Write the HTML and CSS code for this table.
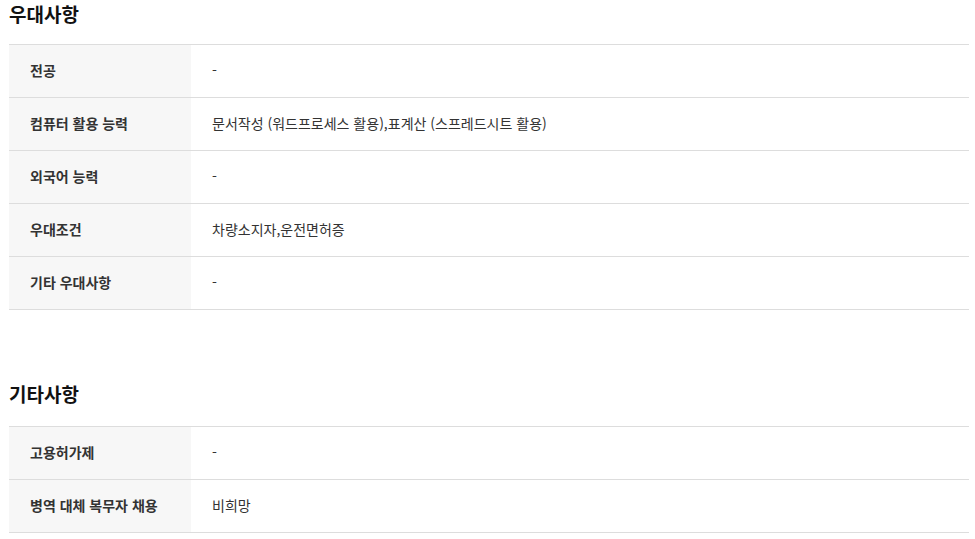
FILE: index.html
```html
<!DOCTYPE html>
<html lang="ko">
<head>
<meta charset="utf-8">
<link rel="stylesheet" href="styles.css">
</head>
<body>
<div class="page">
  <section class="section">
    <h2 class="title">우대사항</h2>
    <table class="info">
      <tr><th>전공</th><td>-</td></tr>
      <tr><th>컴퓨터 활용 능력</th><td>문서작성 (워드프로세스 활용),표계산 (스프레드시트 활용)</td></tr>
      <tr><th>외국어 능력</th><td>-</td></tr>
      <tr><th>우대조건</th><td>차량소지자,운전면허증</td></tr>
      <tr><th>기타 우대사항</th><td>-</td></tr>
    </table>
  </section>
  <section class="section section-next">
    <h2 class="title">기타사항</h2>
    <table class="info">
      <tr><th>고용허가제</th><td>-</td></tr>
      <tr><th>병역 대체 복무자 채용</th><td>비희망</td></tr>
    </table>
  </section>
</div>
</body>
</html>
```

FILE: styles.css
```css
html, body {
  margin: 0;
  padding: 0;
  background: #fff;
}
body {
  font-family: "Noto Sans CJK KR", "Noto Sans", sans-serif;
  color: #333;
}
.page {
  width: 960px;
  margin-left: 9px;
}
.title {
  margin: 0 0 16px;
  font-size: 19px;
  line-height: 26px;
  padding-top: 1px;
  padding-bottom: 1px;
  font-weight: 700;
  color: #111;
}
.section-next {
  margin-top: 70px;
}
.section-next .title {
  margin-bottom: 18px;
}
.info {
  width: 100%;
  border-collapse: collapse;
  border-top: 1px solid #ddd;
  font-size: 14px;
}
.info tr {
  border-bottom: 1px solid #ddd;
}
.info th,
.info td {
  height: 49px;
  padding: 0 0 3px 21px;
  vertical-align: middle;
  text-align: left;
  line-height: 20px;
}
.info th {
  width: 161px;
  background: #f7f7f7;
  font-weight: 700;
  color: #333;
}
.info td {
  font-weight: 400;
  color: #333;
}
```
